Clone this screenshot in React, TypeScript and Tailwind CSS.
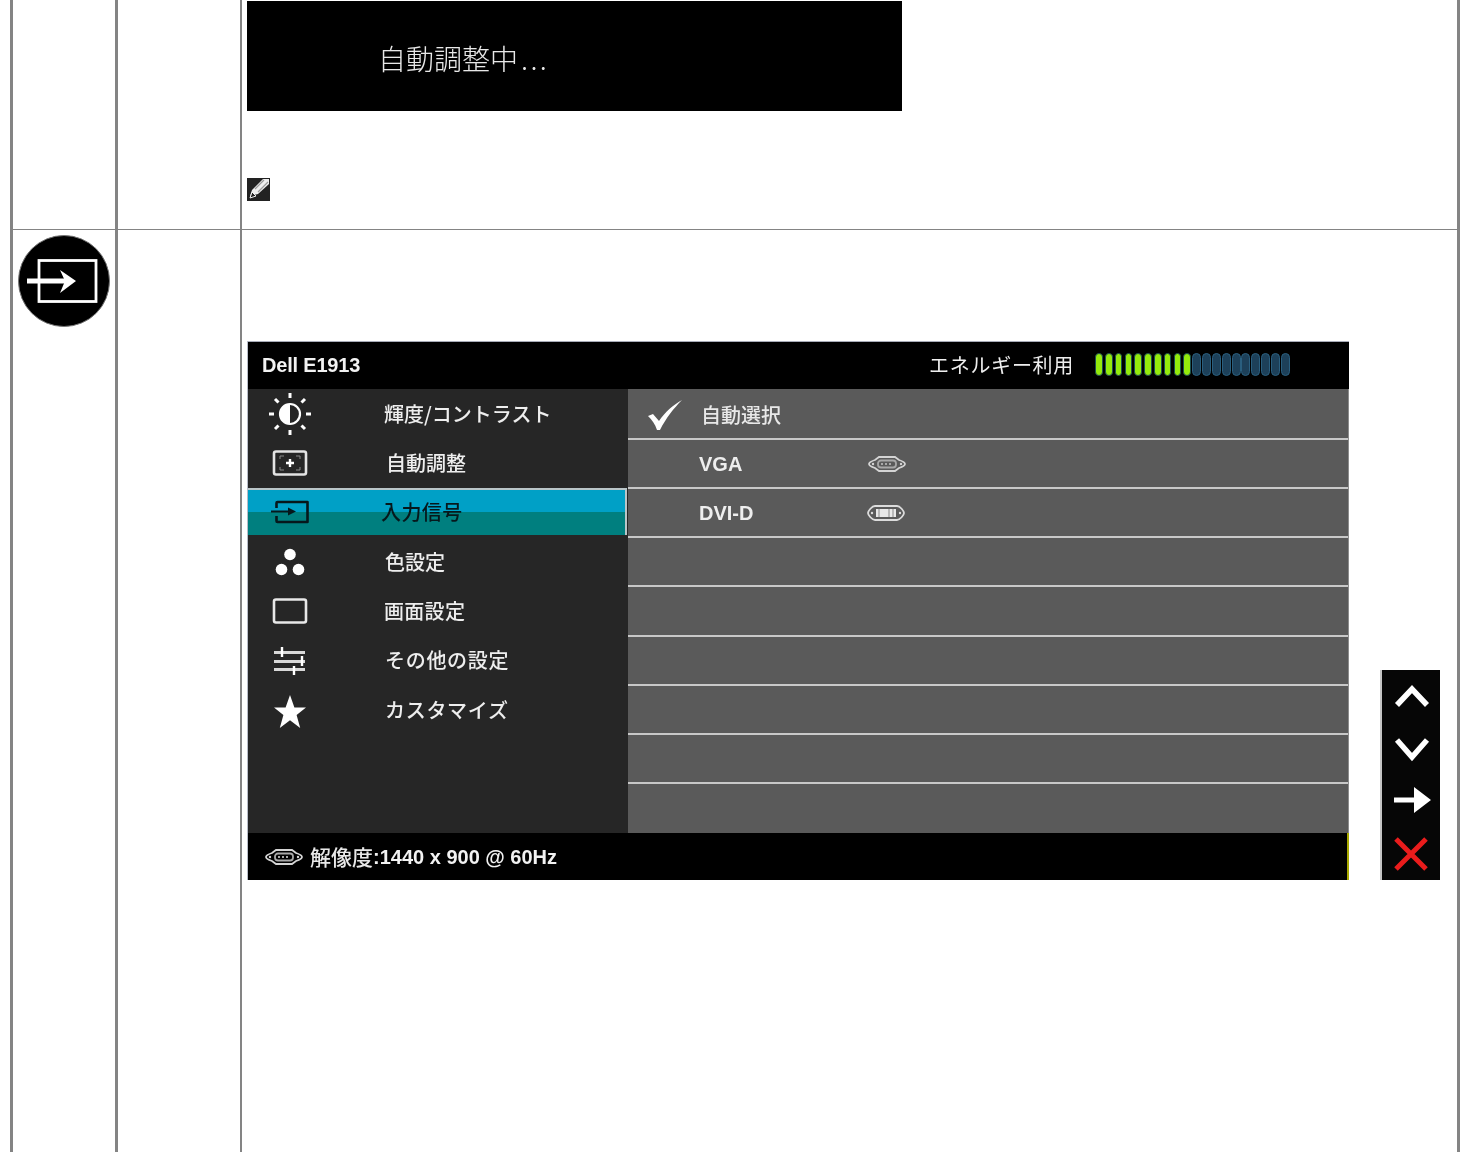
import type { ReactNode } from "react";

const cjk = "font-['Noto_Sans_CJK_JP','Liberation_Sans',sans-serif]";
const latin = "font-['Liberation_Sans','Noto_Sans_CJK_JP',sans-serif]";

function InputGlyph({ color = "white" }: { color?: string }) {
  return (
    <svg width="38" height="24" viewBox="0 0 38 24" fill="none" stroke={color} strokeWidth="2.6">
      <path d="M5.5 8V3a1 1 0 0 1 1-1H36.500v20H6.500a1 1 0 0 1-1-1v-5" strokeLinejoin="round" />
      <path d="M0 11.500h20" strokeWidth="2" />
      <path d="M17 7.500l8 4-8 4z" fill={color} stroke="none" />
    </svg>
  );
}

function SunIcon() {
  return (
    <svg width="44" height="44" viewBox="0 0 44 44" fill="none" stroke="white" strokeWidth="3">
      <circle cx="22" cy="22" r="10" strokeWidth="2.2" />
      <path d="M22 12a10 10 0 0 0 0 20z" fill="white" stroke="none" />
      <path d="M22 1v5M22 38v5M1 22h5M38 22h5M7 7l3.500 3.500M33.500 33.500L37 37M37 7l-3.500 3.500M7 37l3.500-3.500" />
    </svg>
  );
}

function AutoIcon() {
  return (
    <svg width="36" height="28" viewBox="0 0 36 28" fill="none" stroke="#e4e4e4">
      <rect x="2" y="2.500" width="32" height="23" rx="2" strokeWidth="2.6" />
      <path d="M8 10V7h4M24 7h4v3M28 18v3h-4M12 21H8v-3" strokeWidth="1" stroke="#8a8a8a" />
      <path d="M18 10v8M14 14h8" strokeWidth="2.4" stroke="white" />
    </svg>
  );
}

function DotsIcon() {
  return (
    <svg width="32" height="30" viewBox="0 0 32 30" fill="white">
      <circle cx="16" cy="7.500" r="5.800" />
      <circle cx="7.500" cy="22.500" r="5.800" />
      <circle cx="24.500" cy="22.500" r="5.800" />
    </svg>
  );
}

function ScreenIcon() {
  return (
    <svg width="36" height="28" viewBox="0 0 36 28" fill="none" stroke="#e8e8e8" strokeWidth="2.6">
      <rect x="2" y="2.500" width="32" height="23" rx="2" />
    </svg>
  );
}

function SlidersIcon() {
  return (
    <svg className="mt-[2px]" width="34" height="30" viewBox="0 0 34 30" fill="none" stroke="#f0f0f0" strokeWidth="3">
      <path d="M1 6.500h31M1 15.500h31M1 23.500h31" stroke="#d8d8d8" />
      <path d="M9 1v10M29 10v10M21 20v9" strokeWidth="2.400" stroke="white" />
    </svg>
  );
}

function StarIcon() {
  return (
    <svg className="mt-[4px]" width="34" height="36" viewBox="0 0 34 36" fill="white">
      <path d="M17 1l4.400 12.600H33l-9.400 7.500L27.200 34 17 26.200 6.800 34l3.600-12.900L1 13.600h11.600z" />
    </svg>
  );
}

function VgaPort() {
  return (
    <svg width="40" height="16" viewBox="0 0 40 16" fill="none" stroke="#d4d4d4" strokeWidth="1.800">
      <path d="M2 8c0-2 3-3 6-4l4-3h16l4 3c3 1 6 2 6 4s-3 3-6 4l-4 3H12l-4-3c-3-1-6-2-6-4z" />
      <rect x="11" y="4.500" width="18" height="7" rx="3" stroke="#a8a8a8" />
      <path d="M14 8h12" strokeDasharray="2 2" stroke="#a8a8a8" />
      <circle cx="6" cy="8" r="1.200" fill="#d4d4d4" stroke="none" />
      <circle cx="34" cy="8" r="1.200" fill="#d4d4d4" stroke="none" />
    </svg>
  );
}

function DviPort() {
  return (
    <svg width="40" height="16" viewBox="0 0 40 16" fill="none" stroke="#dcdcdc" strokeWidth="1.800">
      <path d="M2 8c0-2 4-7 7-7h22c3 0 7 5 7 7s-4 7-7 7H9c-3 0-7-5-7-7z" />
      <rect x="10" y="4" width="20" height="8" fill="#e8e8e8" stroke="none" />
      <path d="M13 4v8M23 4v8M27 4v8" stroke="#888888" strokeWidth="1" />
      <circle cx="6" cy="8" r="1.200" fill="#dcdcdc" stroke="none" />
      <circle cx="34" cy="8" r="1.200" fill="#dcdcdc" stroke="none" />
    </svg>
  );
}

const menu: { label: string; icon: ReactNode; text: string }[] = [
  { label: "輝度/コントラスト", icon: <SunIcon />, text: "ml-[52px]" },
  { label: "自動調整", icon: <AutoIcon />, text: "ml-[54px]" },
  { label: "入力信号", icon: <InputGlyph color="#06181c" />, text: "ml-[49px] tracking-[0.400px]" },
  { label: "色設定", icon: <DotsIcon />, text: "ml-[53px]" },
  { label: "画面設定", icon: <ScreenIcon />, text: "ml-[52px] tracking-[0.300px]" },
  { label: "その他の設定", icon: <SlidersIcon />, text: "ml-[53px] tracking-[0.700px]" },
  { label: "カスタマイズ", icon: <StarIcon />, text: "ml-[53px] tracking-[0.700px]" },
];

function EnergyBar() {
  const cells = Array.from({ length: 20 }, (_, i) => i);
  return (
    <div className="flex h-[23px] ml-[-1px]">
      {cells.map((i) => (
        <div key={i} className="w-[9.800px] flex justify-center">
          {i < 10 ? (
            <div className="w-[7.500px] rounded-full border-[1.500px] border-[#1c5050] bg-[#94ea0c]" />
          ) : (
            <div className="w-[9px] rounded-full border border-[#2a5f7f] bg-[#1d4059]" />
          )}
        </div>
      ))}
    </div>
  );
}

function OsdMenu() {
  return (
    <div className="w-[1102px] h-[539px] flex flex-col shrink-0 blur-[0.500px] border-l border-[#b8bcc8]">
      <div className="h-[48px] bg-black border-t border-[#a8acb8] flex items-center pl-[14px] pb-[2px]">
        <span className={`${latin} font-bold text-[20px] tracking-[-0.200px] text-[#f2f2f2]`}>Dell E1913</span>
        <span className={`${cjk} ml-[569px] w-[166px] text-[20px] tracking-[0.700px] leading-none text-[#eeeeee]`}>エネルギー利用</span>
        <EnergyBar />
      </div>
      <div className="h-[444px] flex">
        <div className="w-[380px] bg-[#262626] grid grid-rows-9">
          {menu.map((item, i) => (
            <div
              key={item.label}
              className={
                i === 2
                  ? "flex items-center bg-[linear-gradient(#00a0c6_50%,#007f7f_50%)] border-t-2 border-r-2 border-[#b9c5c8] mb-[2px] mr-px"
                  : "flex items-center"
              }
            >
              <div className="w-[84px] flex justify-center">{item.icon}</div>
              <span
                className={`${cjk} ${item.text} text-[20px] leading-none font-medium ${
                  i === 2 ? "text-[#06181c]" : "text-[#eeeeee]"
                }`}
              >
                {item.label}
              </span>
            </div>
          ))}
        </div>
        <div className="flex-1 grid grid-rows-9 pt-[2px] bg-[#5a5a5a] border-r border-[#8d8d8d]">
          <div className="flex items-center border-b-2 border-[#c8c8c8]">
            <div className="w-[73px] pl-[19px]">
              <svg width="36" height="32" viewBox="0 0 36 32" fill="white">
                <path d="M1 17l5-2 6 7C18 13 26 6 35 1 27 9 19 19 13 31h-3C8 25 5 21 1 17z" />
              </svg>
            </div>
            <span className={`${cjk} text-[20px] leading-none font-medium text-[#e8e8e8]`}>自動選択</span>
          </div>
          <div className="flex items-center border-b-2 border-[#c8c8c8]">
            <span className={`${latin} ml-[71px] w-[168px] font-bold text-[20px] text-[#eeeeee]`}>VGA</span>
            <VgaPort />
          </div>
          <div className="flex items-center border-b-2 border-[#c8c8c8]">
            <span className={`${latin} ml-[71px] w-[167px] font-bold text-[20px] text-[#eeeeee]`}>DVI-D</span>
            <DviPort />
          </div>
          <div className="border-b-2 border-[#c8c8c8]" />
          <div className="border-b-2 border-[#c8c8c8]" />
          <div className="border-b-2 border-[#c8c8c8]" />
          <div className="border-b-2 border-[#c8c8c8]" />
          <div className="border-b-2 border-[#c8c8c8]" />
          <div />
        </div>
      </div>
      <div className="h-[47px] bg-black border-r-2 border-[#a8a800] flex items-center pl-[16px]">
        <VgaPort />
        <span className={`${cjk} ml-[6px] text-[21px] leading-none font-medium text-[#e8e8e8]`}>解像度</span>
        <span className={`${latin} font-bold text-[20px] text-[#f2f2f2]`}>:1440 x 900 @ 60Hz</span>
      </div>
    </div>
  );
}

function ButtonStrip() {
  return (
    <div className="w-[60px] h-[210px] self-end bg-[#060606] border-l-2 border-[#c4c4c4] flex flex-col items-center blur-[0.400px]">
      <svg className="mt-[13px] ml-[2px]" width="36" height="26" viewBox="0 0 36 26" fill="none" stroke="white" strokeWidth="5.500">
        <path d="M3 22L18 6l15 16" />
      </svg>
      <svg className="mt-[27px] ml-[2px]" width="36" height="26" viewBox="0 0 36 26" fill="none" stroke="white" strokeWidth="5.500">
        <path d="M3 4l15 17L33 4" />
      </svg>
      <svg className="mt-[24px] ml-[4px]" width="40" height="28" viewBox="0 0 40 28" fill="white">
        <path d="M1 11.500h20V1l17 13-17 13V16.500H1z" />
      </svg>
      <svg className="mt-[23px]" width="36" height="34" viewBox="0 0 36 34" fill="none" stroke="#ea1c1c" strokeWidth="5">
        <path d="M3 2l30 30M33 2L3 32" />
      </svg>
    </div>
  );
}

export default function App() {
  return (
    <div className="h-[1152px] overflow-hidden bg-white">
      <div className="ml-[10px] w-[1450px] h-full border-x-[3px] border-[#848484] flex flex-col">
        <div className="h-[229px] flex shrink-0">
          <div className="w-[105px] border-r-[3px] border-[#848484]" />
          <div className="w-[124px] border-r-2 border-[#848484]" />
          <div className="flex-1 pl-[5px] pt-px">
            <div className="w-[655px] h-[110px] bg-black flex items-center pl-[131px] pt-[4px]">
              <span className={`${cjk} text-[28px] leading-none font-light text-[#e8e8e8] blur-[0.300px]`}>
                自動調整中<span className="ml-[3px] tracking-[2.400px]">...</span>
              </span>
            </div>
            <div className="mt-[67px] w-[23px] h-[23px] bg-[#222222] overflow-hidden">
              <svg width="23" height="23" viewBox="0 0 23 23">
                <path d="M3 18l2-6L16 1h6v5L11 16z" fill="#eeeeee" />
                <path d="M8 11l9-9M11 14l10-10" stroke="#999999" strokeWidth="1.200" />
                <path d="M3 20l2-6 4 4z" fill="#222222" stroke="#eeeeee" strokeWidth="1" />
              </svg>
            </div>
          </div>
        </div>
        <div className="flex-1 flex">
          <div className="w-[105px] border-r-[3px] border-[#848484] border-t border-t-[#848484] pt-[5px] pl-[5px]">
            <div className="w-[92px] h-[92px] rounded-full bg-black border border-[#777777]">
              <svg width="90" height="90" viewBox="1 1 90 90" fill="none" stroke="white" strokeWidth="2.800">
                <rect x="21" y="25.500" width="57" height="41" />
                <path d="M9 46h42" strokeWidth="5" />
                <path d="M42 35l16 11-16 12 5-12z" fill="white" stroke="none" />
              </svg>
            </div>
          </div>
          <div className="w-[124px] border-r-2 border-[#848484] border-t border-t-[#848484]" />
          <div className="flex-1 border-t border-[#848484] pt-[111px] pl-[5px] flex items-start">
            <div className="flex items-end gap-[31px]">
              <OsdMenu />
              <ButtonStrip />
            </div>
          </div>
        </div>
      </div>
    </div>
  );
}
